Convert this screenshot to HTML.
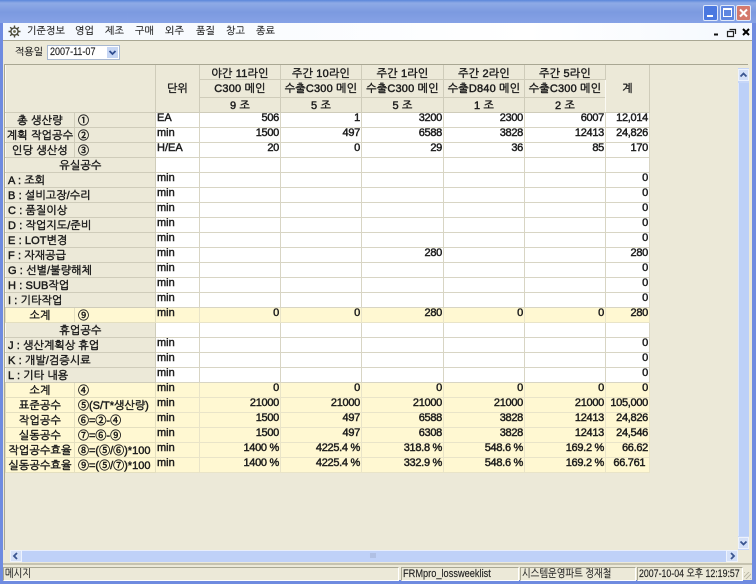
<!DOCTYPE html>
<html lang="ko">
<head>
<meta charset="utf-8">
<style>
html,body{margin:0;padding:0;background:#ece9d8}
body{width:756px;height:584px;position:relative;overflow:hidden;font-family:"Liberation Sans","NanumGothic","Noto Sans CJK KR",sans-serif;font-size:11px;color:#222}
.a{position:absolute}
#title{left:0;top:0;width:756px;height:23px;background:linear-gradient(#5a86da 0,#8eaae6 3px,#7c9ae0 12px,#86a2e6 23px)}
#menu{left:3px;top:23px;width:749px;height:17px;background:linear-gradient(90deg,#f4f8fe,#fff 70%,#f4f8fe);border-bottom:1px solid #a9a793}
#menu span{position:absolute;top:2px;font-size:10px;line-height:14px;white-space:nowrap;color:#222;letter-spacing:.1px;-webkit-text-stroke:.15px #222}
.wb{top:5px;width:13px;height:14px;border-radius:2px;border:1px solid #dfe8fa}
#lb{left:0;top:23px;width:3px;height:561px;background:#6f8be0}
#rb{left:752px;top:23px;width:4px;height:561px;background:#6f8be0}
#bb{left:0;top:580px;width:756px;height:4px;background:#6f8be0}
#date{left:47px;top:45px;width:71px;height:13px;border:1px solid #a8b8d0;background:#fff;font-size:11px;line-height:13px;-webkit-text-stroke:.15px #222}
#grid{left:5px;top:64px;border-collapse:collapse;table-layout:fixed;width:644px}
#grid td{border:1px solid #d8d5c4;padding:0;height:14px;line-height:14px;overflow:hidden;white-space:nowrap;background:#fff;font-size:11px;-webkit-text-stroke:.45px #1c1c1c;color:#1c1c1c}
#grid td.h{background:#ece9d8;text-align:center;border-color:#fbfaf4 #cfccba #cfccba #fbfaf4;letter-spacing:.2px;padding-top:2px;height:12px;line-height:12px}
#grid td.h.t1{padding-top:4px;height:10px;line-height:10px}
#grid td.h.t2{padding-top:2px;height:15px;line-height:15px}
#grid td.h.t3{padding-top:3px;height:11px;line-height:11px}
#grid td.h.rs{padding-top:0;height:14px;line-height:14px}
#grid td.l{text-align:left;padding-left:2px;letter-spacing:.1px}
#grid td.n{text-align:left;padding-left:1px;vertical-align:top;line-height:11px}
#grid td.r{text-align:right;padding-right:1px;vertical-align:top;line-height:11px;letter-spacing:-.3px}
#grid tr.y td{background:#fff8d2;border-color:#e9e4c8}
#grid tr.y td.h{background:#fff8d2;border-color:#e4dfbf}
#grid td.c{text-align:left;padding-left:3px;letter-spacing:0}
.ab{background:#d4e0f8;border:1px solid #eef3fd;box-sizing:border-box}
.ab svg{position:absolute;left:0;top:0}
.st{top:567px;height:12px;line-height:12px;font-size:11px;border:1px solid;border-color:#a9a793 #fff #fff #a9a793;white-space:nowrap;overflow:hidden;color:#222;padding-left:1px;-webkit-text-stroke:.15px #222}
.st span,#date span{display:inline-block;transform:scaleX(.84);transform-origin:left center}
#wrap{left:0;top:0;width:756px;height:584px;filter:blur(.35px)}
</style>
</head>
<body>
<div class="a" id="wrap">
<div class="a" id="title"></div>
<div class="a wb" style="left:703px;background:#4a78e0"><div class="a" style="left:3px;top:9px;width:6px;height:2px;background:#fff"></div></div>
<div class="a wb" style="left:720px;background:#5f86e0"><div class="a" style="left:2px;top:2px;width:7px;height:6px;border:1px solid #fff;border-top-width:2px"></div></div>
<div class="a wb" style="left:736px;background:#d4796c"><svg class="a" style="left:0;top:0" width="13" height="14"><path d="M3 3.5L10 10.5M10 3.5L3 10.5" stroke="#fff" stroke-width="2"/></svg></div>
<div class="a" id="lb"></div><div class="a" id="rb"></div><div class="a" id="bb"></div>
<div class="a" id="menu">
<svg class="a" style="left:5px;top:2px" width="13" height="13" viewBox="0 0 13 13"><g fill="none" stroke="#4a4a3a" stroke-width="1.4"><circle cx="6.5" cy="6.5" r="3.6"/><path d="M6.5 .5V3M6.5 10V12.5M.5 6.5H3M10 6.5H12.5M2.2 2.2L4 4M9 9L10.8 10.8M10.8 2.2L9 4M4 9L2.2 10.8"/></g><circle cx="6.5" cy="6.5" r="1.4" fill="#6a6a50"/></svg>
<span style="left:24px">기준정보</span><span style="left:72px">영업</span><span style="left:102px">제조</span><span style="left:132px">구매</span><span style="left:162px">외주</span><span style="left:193px">품질</span><span style="left:223px">창고</span><span style="left:253px">종료</span>
<svg class="a" style="left:708px;top:3px" width="40" height="12"><path d="M3 8.5H7" stroke="#111" stroke-width="2"/><path d="M18.5 3.5H24.5V8M16.5 5.5H22.5V10.5H16.5Z" fill="none" stroke="#222" stroke-width="1.2"/><path d="M32 3L38 9M38 3L32 9" stroke="#000" stroke-width="2"/></svg>
</div>
<div class="a" style="left:15px;top:46px;font-size:10px;line-height:13px;color:#222;letter-spacing:-.1px;-webkit-text-stroke:.15px #222">적용일</div>
<div class="a" id="date"><span style="margin-left:2px;transform:scaleX(.82)">2007-11-07</span></div>
<div class="a ab" style="left:107px;top:47px;width:11px;height:11px;border:0;background:#c6d6f4"><svg width="11" height="11"><path d="M2.5 4L5.5 7L8.5 4" fill="none" stroke="#2f4d90" stroke-width="1.8"/></svg></div>

<table class="a" id="grid">
<colgroup><col style="width:69px"><col style="width:81px"><col style="width:44px"><col style="width:81px"><col style="width:81px"><col style="width:82px"><col style="width:81px"><col style="width:81px"><col style="width:44px"></colgroup>
<tr><td class="h rs" colspan="2" rowspan="3"></td><td class="h rs" rowspan="3">단위</td><td class="h t1">야간 11라인</td><td class="h t1">주간 10라인</td><td class="h t1">주간 1라인</td><td class="h t1">주간 2라인</td><td class="h t1">주간 5라인</td><td class="h rs" rowspan="3">계</td></tr>
<tr><td class="h t2">C300 메인</td><td class="h t2">수출C300 메인</td><td class="h t2">수출C300 메인</td><td class="h t2">수출D840 메인</td><td class="h t2">수출C300 메인</td></tr>
<tr><td class="h t3">9 조</td><td class="h t3">5 조</td><td class="h t3">5 조</td><td class="h t3">1 조</td><td class="h t3">2 조</td></tr>
<tr><td class="h">총 생산량</td><td class="h c">①</td><td class="n">EA</td><td class="r">506</td><td class="r">1</td><td class="r">3200</td><td class="r">2300</td><td class="r">6007</td><td class="r">12,014</td></tr>
<tr><td class="h">계획 작업공수</td><td class="h c">②</td><td class="n">min</td><td class="r">1500</td><td class="r">497</td><td class="r">6588</td><td class="r">3828</td><td class="r">12413</td><td class="r">24,826</td></tr>
<tr><td class="h">인당 생산성</td><td class="h c">③</td><td class="n">H/EA</td><td class="r">20</td><td class="r">0</td><td class="r">29</td><td class="r">36</td><td class="r">85</td><td class="r">170</td></tr>
<tr><td class="h" colspan="2">유실공수</td><td class="n"></td><td class="r"></td><td class="r"></td><td class="r"></td><td class="r"></td><td class="r"></td><td class="r"></td></tr>
<tr><td class="h l" colspan="2">A : 조회</td><td class="n">min</td><td class="r"></td><td class="r"></td><td class="r"></td><td class="r"></td><td class="r"></td><td class="r">0</td></tr>
<tr><td class="h l" colspan="2">B : 설비고장/수리</td><td class="n">min</td><td class="r"></td><td class="r"></td><td class="r"></td><td class="r"></td><td class="r"></td><td class="r">0</td></tr>
<tr><td class="h l" colspan="2">C : 품질이상</td><td class="n">min</td><td class="r"></td><td class="r"></td><td class="r"></td><td class="r"></td><td class="r"></td><td class="r">0</td></tr>
<tr><td class="h l" colspan="2">D : 작업지도/준비</td><td class="n">min</td><td class="r"></td><td class="r"></td><td class="r"></td><td class="r"></td><td class="r"></td><td class="r">0</td></tr>
<tr><td class="h l" colspan="2">E : LOT변경</td><td class="n">min</td><td class="r"></td><td class="r"></td><td class="r"></td><td class="r"></td><td class="r"></td><td class="r">0</td></tr>
<tr><td class="h l" colspan="2">F : 자재공급</td><td class="n">min</td><td class="r"></td><td class="r"></td><td class="r">280</td><td class="r"></td><td class="r"></td><td class="r">280</td></tr>
<tr><td class="h l" colspan="2">G : 선별/불량해체</td><td class="n">min</td><td class="r"></td><td class="r"></td><td class="r"></td><td class="r"></td><td class="r"></td><td class="r">0</td></tr>
<tr><td class="h l" colspan="2">H : SUB작업</td><td class="n">min</td><td class="r"></td><td class="r"></td><td class="r"></td><td class="r"></td><td class="r"></td><td class="r">0</td></tr>
<tr><td class="h l" colspan="2">I : 기타작업</td><td class="n">min</td><td class="r"></td><td class="r"></td><td class="r"></td><td class="r"></td><td class="r"></td><td class="r">0</td></tr>
<tr class="y"><td class="h">소계</td><td class="h c">⑨</td><td class="n">min</td><td class="r">0</td><td class="r">0</td><td class="r">280</td><td class="r">0</td><td class="r">0</td><td class="r">280</td></tr>
<tr><td class="h" colspan="2">휴업공수</td><td class="n"></td><td class="r"></td><td class="r"></td><td class="r"></td><td class="r"></td><td class="r"></td><td class="r"></td></tr>
<tr><td class="h l" colspan="2">J : 생산계획상 휴업</td><td class="n">min</td><td class="r"></td><td class="r"></td><td class="r"></td><td class="r"></td><td class="r"></td><td class="r">0</td></tr>
<tr><td class="h l" colspan="2">K : 개발/검증시료</td><td class="n">min</td><td class="r"></td><td class="r"></td><td class="r"></td><td class="r"></td><td class="r"></td><td class="r">0</td></tr>
<tr><td class="h l" colspan="2">L : 기타 내용</td><td class="n">min</td><td class="r"></td><td class="r"></td><td class="r"></td><td class="r"></td><td class="r"></td><td class="r">0</td></tr>
<tr class="y"><td class="h">소계</td><td class="h c">④</td><td class="n">min</td><td class="r">0</td><td class="r">0</td><td class="r">0</td><td class="r">0</td><td class="r">0</td><td class="r">0</td></tr>
<tr class="y"><td class="h">표준공수</td><td class="h c">⑤(S/T*생산량)</td><td class="n">min</td><td class="r">21000</td><td class="r">21000</td><td class="r">21000</td><td class="r">21000</td><td class="r">21000</td><td class="r">105,000</td></tr>
<tr class="y"><td class="h">작업공수</td><td class="h c">⑥=②-④</td><td class="n">min</td><td class="r">1500</td><td class="r">497</td><td class="r">6588</td><td class="r">3828</td><td class="r">12413</td><td class="r">24,826</td></tr>
<tr class="y"><td class="h">실동공수</td><td class="h c">⑦=⑥-⑨</td><td class="n">min</td><td class="r">1500</td><td class="r">497</td><td class="r">6308</td><td class="r">3828</td><td class="r">12413</td><td class="r">24,546</td></tr>
<tr class="y"><td class="h">작업공수효율</td><td class="h c">⑧=(⑤/⑥)*100</td><td class="n">min</td><td class="r">1400 %</td><td class="r">4225.4 %</td><td class="r">318.8 %</td><td class="r">548.6 %</td><td class="r">169.2 %</td><td class="r">66.62</td></tr>
<tr class="y"><td class="h">실동공수효율</td><td class="h c">⑨=(⑤/⑦)*100</td><td class="n">min</td><td class="r">1400 %</td><td class="r">4225.4 %</td><td class="r">332.9 %</td><td class="r">548.6 %</td><td class="r">169.2 %</td><td class="r">66.761&nbsp;</td></tr>
</table>

<div class="a" style="left:4px;top:64px;width:1px;height:486px;background:#a9a793"></div>
<div class="a" style="left:5px;top:64px;width:743px;height:1px;background:#a9a793"></div>
<div class="a" style="left:738px;top:68px;width:11px;height:482px;background:#c6d6f8"></div>
<div class="a ab" style="left:738px;top:69px;width:11px;height:12px"><svg width="9" height="10"><path d="M1.5 6.5L4.5 3.5L7.5 6.5" fill="none" stroke="#3a5590" stroke-width="1.8"/></svg></div>
<div class="a" style="left:738px;top:83px;width:11px;height:453px;background:#bcd0f8;border-left:1px solid #dfe8fc;box-sizing:border-box"></div>
<div class="a ab" style="left:738px;top:537px;width:11px;height:12px"><svg width="9" height="10"><path d="M1.5 3.5L4.5 6.5L7.5 3.5" fill="none" stroke="#3a5590" stroke-width="1.8"/></svg></div>
<div class="a" style="left:10px;top:550px;width:728px;height:12px;background:#bfd1f8;border-top:1px solid #e8eefc;box-sizing:border-box"></div>
<div class="a ab" style="left:10px;top:550px;width:12px;height:12px"><svg width="10" height="10"><path d="M6 2L3 5L6 8" fill="none" stroke="#3a5590" stroke-width="1.8"/></svg></div>
<div class="a ab" style="left:726px;top:550px;width:12px;height:12px"><svg width="10" height="10"><path d="M4 2L7 5L4 8" fill="none" stroke="#3a5590" stroke-width="1.8"/></svg></div>
<div class="a" style="left:370px;top:553px;width:6px;height:5px;background:#b0c0e4"></div>
<div class="a" style="left:3px;top:563px;width:749px;height:2px;background:#c6c3b0"></div>

<div class="a st" style="left:3px;width:393px"><span>메시지</span></div>
<div class="a st" style="left:401px;width:115px"><span>FRMpro_lossweeklist</span></div>
<div class="a st" style="left:520px;width:113px"><span>시스템운영파트 정재철</span></div>
<div class="a st" style="left:637px;width:103px"><span style="transform:scaleX(.8)">2007-10-04 오후 12:19:57</span></div>
<div class="a" style="left:744px;top:572px;width:7px;height:7px;background:repeating-linear-gradient(135deg,#bdbaa8 0 1px,transparent 1px 3px)"></div>
</div>
</body>
</html>
